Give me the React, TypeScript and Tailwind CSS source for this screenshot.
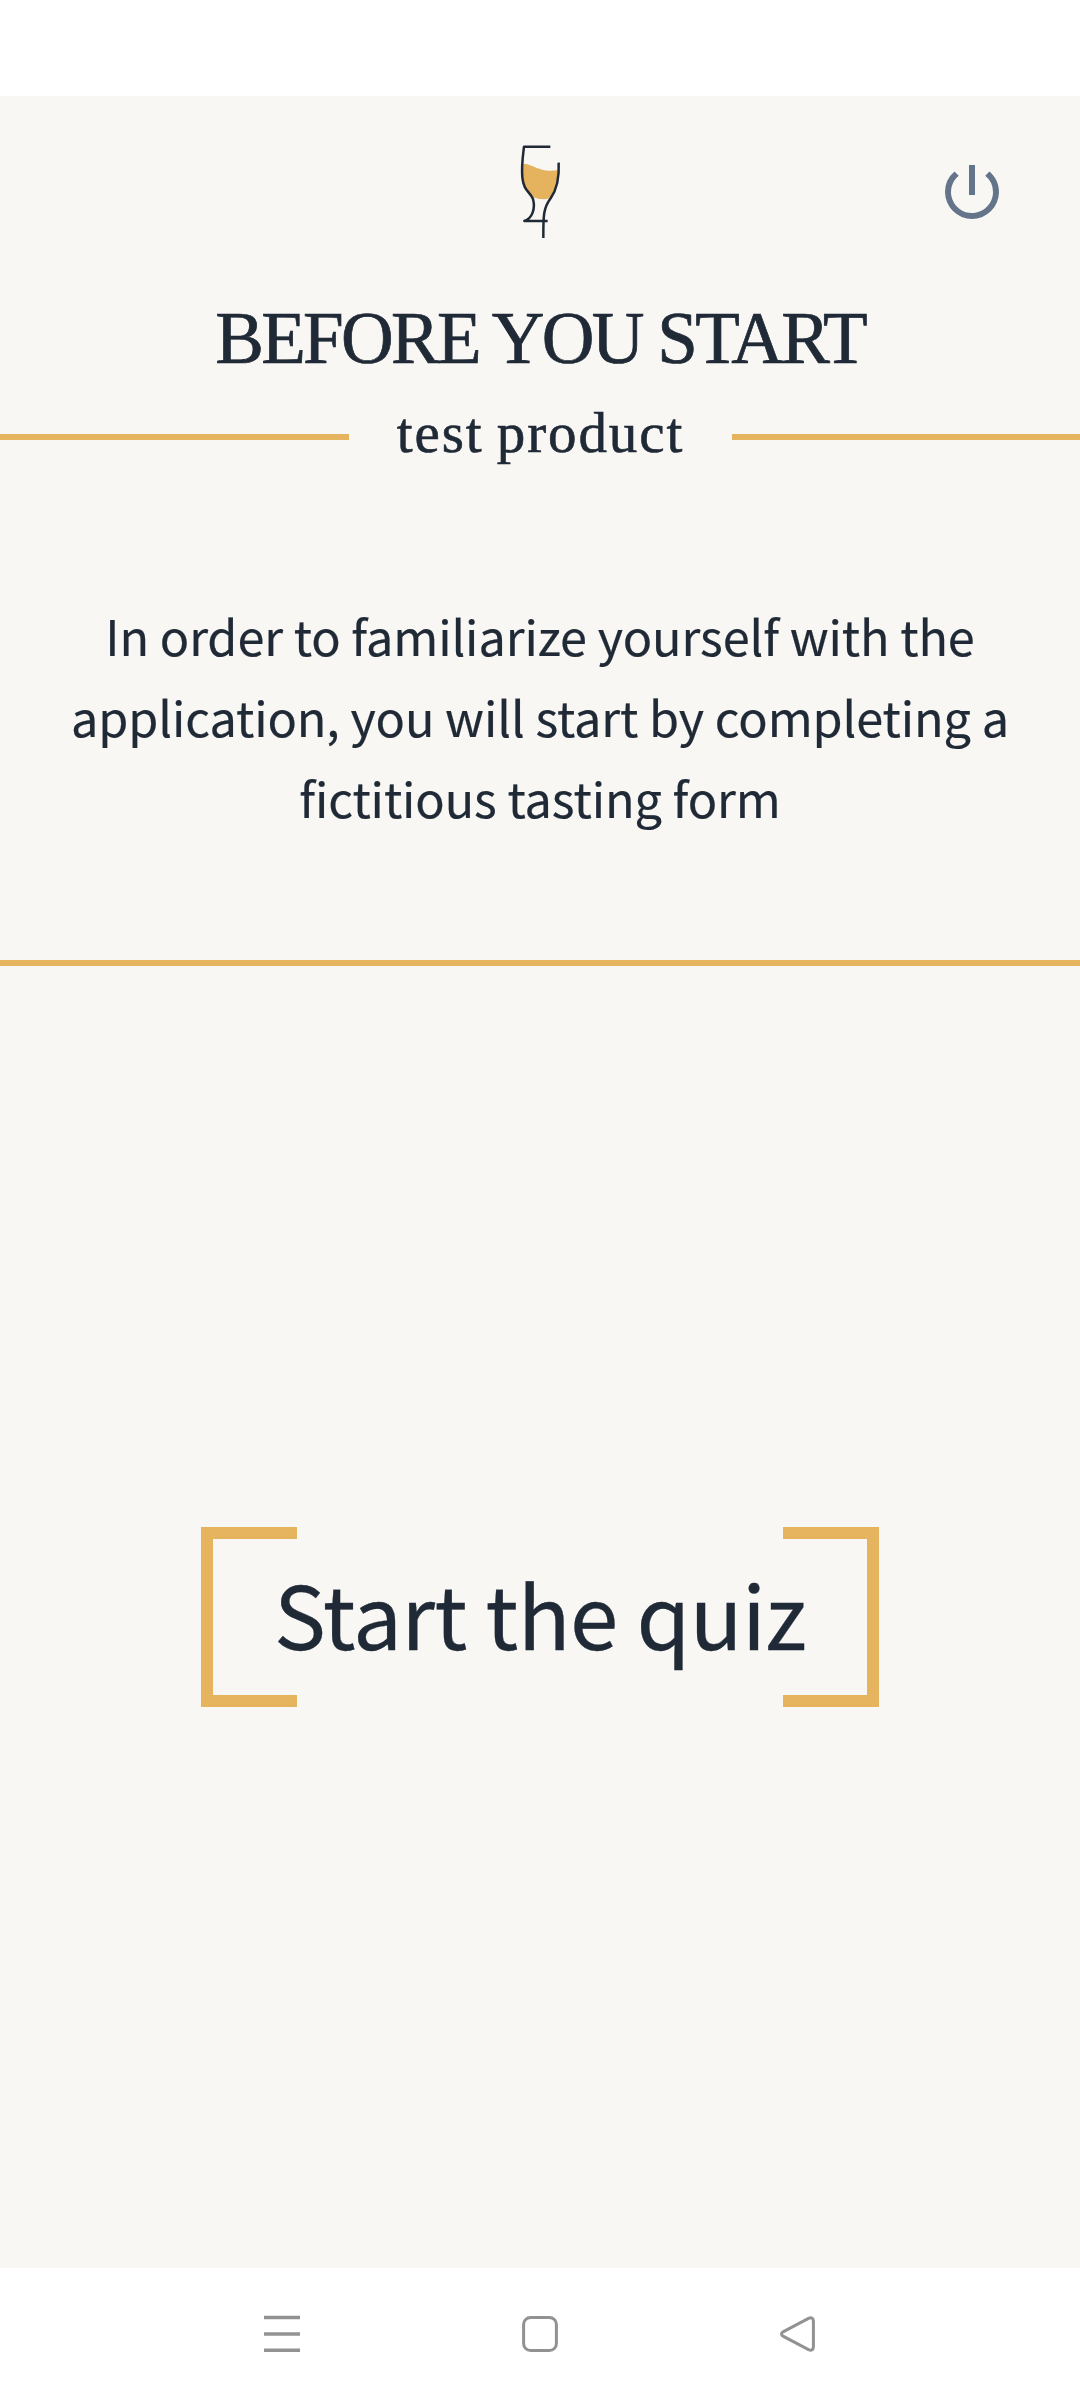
import { MdPowerSettingsNew } from 'react-icons/md'

function GlassLogo() {
    return (
        <svg width="100" height="120" viewBox="0 0 300 360" fill="none">
            <path
                d="M100 101C132 104 146 122 178 122C190 123 198 121 206 121C206 150 199 174 179 205C164 210 146 208 130 202C116 187 103 179 99 150C97 134 98 118 100 101Z"
                fill="#e5b25d"
            />
            <path
                d="M181 50H102C99 76 94 107 97 142C101 184 120 184 129 207C137 237 126 266 103 273H173"
                stroke="#202a37"
                strokeWidth="7.5"
                strokeLinejoin="round"
            />
            <path
                d="M206 98C208 139 203 175 182 205C159 235 160 261 160 324"
                stroke="#202a37"
                strokeWidth="7.5"
            />
        </svg>
    )
}

function Header() {
    return (
        <header className="grid h-[184px] grid-cols-3 pt-[34px]">
            <div />
            <div className="flex justify-center">
                <GlassLogo />
            </div>
            <div className="flex items-start justify-end pt-[26px] pr-18">
                <button aria-label="Log out" className="text-[#64748b]">
                    <MdPowerSettingsNew size={72} />
                </button>
            </div>
        </header>
    )
}

function StartButton() {
    return (
        <button className="flex h-[180px] w-[678px] items-stretch justify-between">
            <span className="w-24 shrink-0 border-y-12 border-l-12 border-[#e6b35f]" />
            <span className="-mx-8 pt-[20px] text-[87px] leading-[130px] tracking-[-0.6px] whitespace-nowrap [-webkit-text-stroke:0.3px_#202a37]">
                Start the quiz
            </span>
            <span className="w-24 shrink-0 border-y-12 border-r-12 border-[#e6b35f]" />
        </button>
    )
}

function NavigationBar() {
    return (
        <nav className="flex h-[132px] items-center justify-center gap-[158px] bg-white text-[#929292]">
            <svg width="100" height="100" viewBox="0 0 100 100" fill="none" stroke="currentColor" strokeWidth="3.4">
                <path d="M32 33.5H68M32 50H68M32 66.3H68" />
            </svg>
            <svg width="100" height="100" viewBox="0 0 100 100" fill="none" stroke="currentColor" strokeWidth="3">
                <rect x="33.6" y="33.5" width="32.8" height="33" rx="7" />
            </svg>
            <svg width="100" height="100" viewBox="0 0 100 100" fill="none" stroke="currentColor" strokeWidth="3">
                <path d="M35 47.8L60.5 34.4Q65 32.5 65.4 37V63Q65 67.5 60.5 65.6L35 52.2Q32 50 35 47.8Z" />
            </svg>
        </nav>
    )
}

export default function App() {
    return (
        <div className="flex h-[2400px] w-[1080px] flex-col bg-[#f8f7f3] font-['Noto_Sans_CJK_SC',sans-serif] text-[#202a37]">
            <div className="h-24 shrink-0 bg-white" />
            <Header />

            <h1 className="h-[120px] pt-[21px] text-center font-['Liberation_Serif',serif] text-[73px] leading-[76px] tracking-[-2.7px] whitespace-nowrap [-webkit-text-stroke:0.7px_#202a37]">
                BEFORE YOU START
            </h1>
            <div className="flex h-[74px] items-center">
                <div className="h-1.5 w-[349px] bg-[#e6b35f]" />
                <h2 className="flex-1 pb-2 text-center font-['Liberation_Serif',serif] text-[57px] leading-[66px] tracking-[1.9px] [word-spacing:-3px] [-webkit-text-stroke:0.6px_#202a37]">
                    test product
                </h2>
                <div className="h-1.5 w-[348px] bg-[#e6b35f]" />
            </div>

            <div className="h-[492px] shrink-0 border-b-6 border-[#e6b35f] pt-[121px] text-center text-[48.6px] leading-[81px] tracking-[-0.1px] whitespace-nowrap [-webkit-text-stroke:0.2px_#202a37]">
                <p>
                    In order to familiarize yourself with the
                    <br />
                    application, you will start by completing a
                    <br />
                    fictitious tasting form
                </p>
            </div>

            <main className="flex flex-1 items-center justify-center">
                <StartButton />
            </main>
            <NavigationBar />
        </div>
    )
}
